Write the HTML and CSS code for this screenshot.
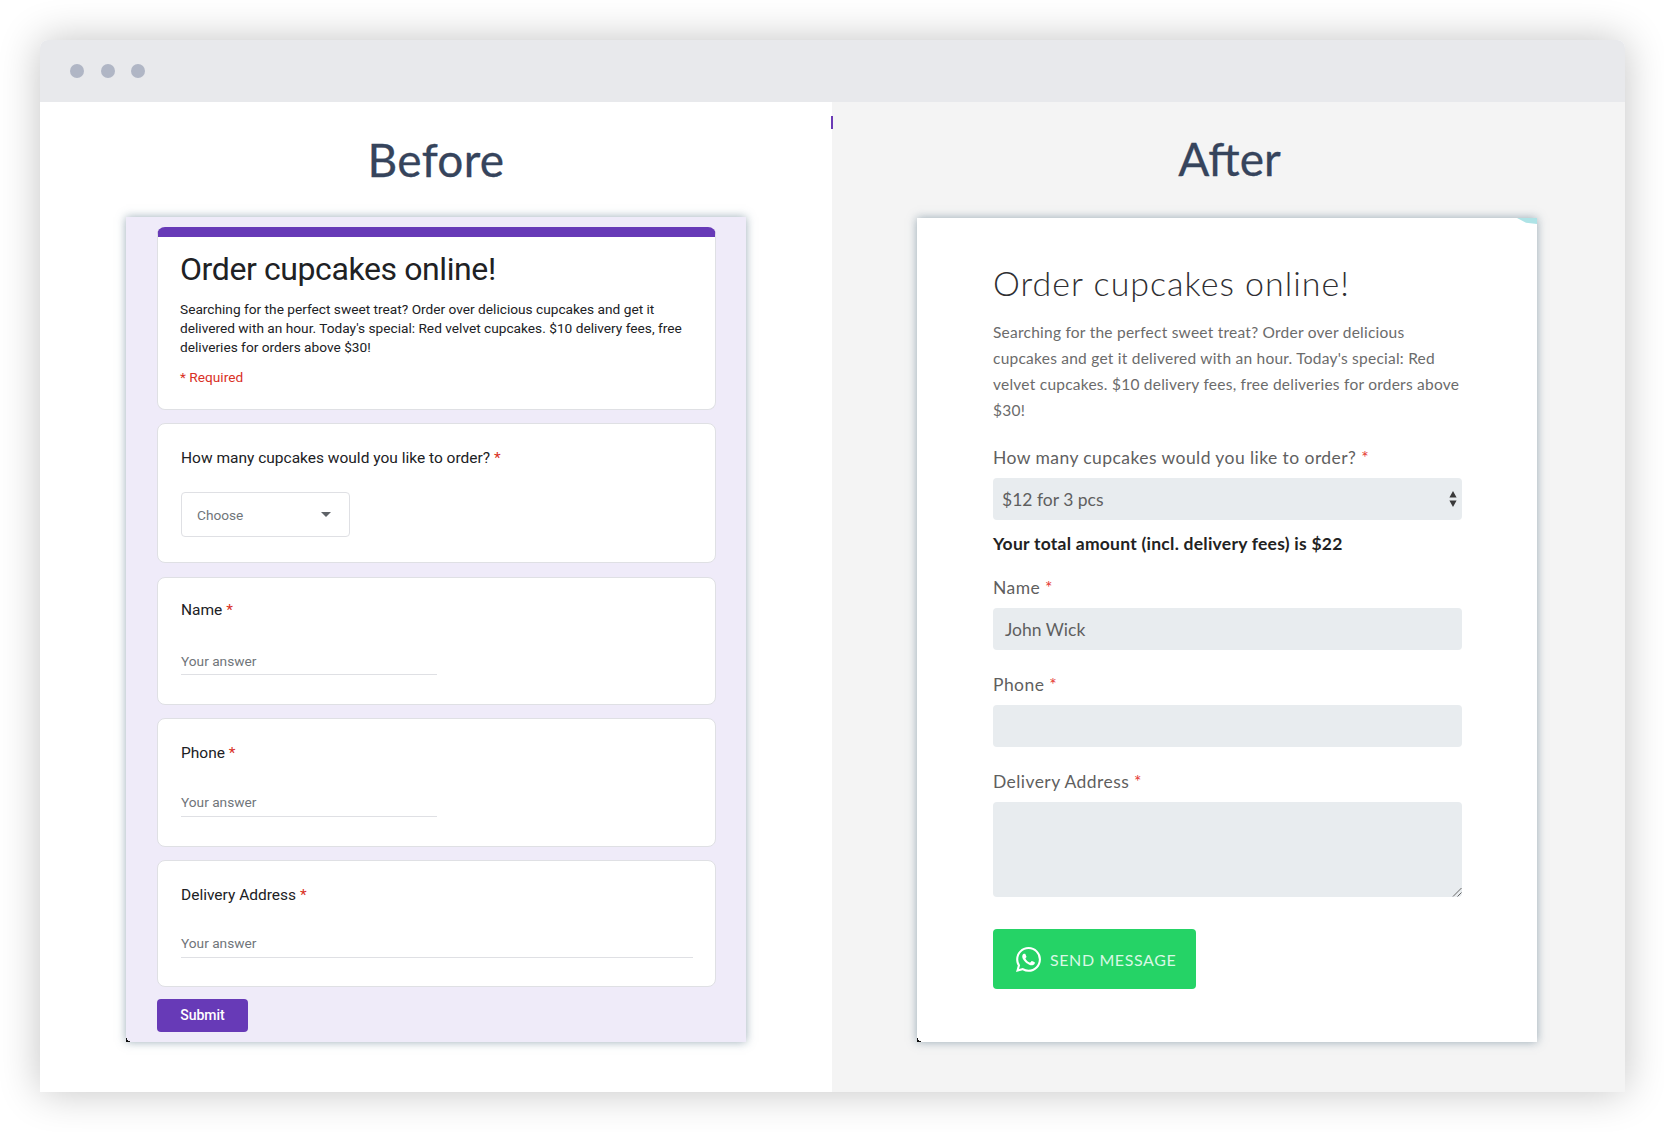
FILE: index.html
```html
<!DOCTYPE html>
<html lang="en">
<head>
<meta charset="utf-8">
<title>Before and After</title>
<link rel="stylesheet" href="styles.css">
</head>
<body>
<div class="window">
  <div class="titlebar"><span class="dot"></span><span class="dot"></span><span class="dot"></span></div>
  <div class="panels">
    <section class="panel panel-before">
      <h2 class="panel-title panel-title-before">Before</h2>
      <div class="shot shot-before">
        <div class="gcard gcard-head">
          <h1 class="g-title">Order cupcakes online!</h1>
          <p class="g-desc">Searching for the perfect sweet treat? Order over delicious cupcakes and get it delivered with an hour. Today's special: Red velvet cupcakes. $10 delivery fees, free deliveries for orders above $30!</p>
          <p class="g-required">* Required</p>
        </div>
        <div class="gcard gcard-select">
          <div class="g-label">How many cupcakes would you like to order? <span class="g-star">*</span></div>
          <div class="g-dropdown"><span>Choose</span><i class="g-caret"></i></div>
        </div>
        <div class="gcard gcard-a">
          <div class="g-label">Name <span class="g-star">*</span></div>
          <div class="g-answer">Your answer</div>
        </div>
        <div class="gcard gcard-b">
          <div class="g-label">Phone <span class="g-star">*</span></div>
          <div class="g-answer">Your answer</div>
        </div>
        <div class="gcard gcard-c">
          <div class="g-label">Delivery Address <span class="g-star">*</span></div>
          <div class="g-answer g-answer-wide">Your answer</div>
        </div>
        <div class="g-submit">Submit</div>
      </div>
    </section>
    <section class="panel panel-after">
      <h2 class="panel-title panel-title-after">After</h2>
      <div class="shot shot-after">
        <h1 class="a-title">Order cupcakes online!</h1>
        <p class="a-desc">Searching for the perfect sweet treat? Order over delicious cupcakes and get it delivered with an hour. Today's special: Red velvet cupcakes. $10 delivery fees, free deliveries for orders above $30!</p>
        <div class="a-label">How many cupcakes would you like to order? <span class="a-star">*</span></div>
        <div class="a-field a-select"><span>$12 for 3 pcs</span>
          <svg class="a-arrows" width="8" height="16" viewBox="0 0 8 16"><path d="M4 0l3.6 6.4H.4zM4 16L.4 9.6h7.2z" fill="#3a3a3a"/></svg>
        </div>
        <div class="a-total">Your total amount (incl. delivery fees) is $22</div>
        <div class="a-label">Name <span class="a-star">*</span></div>
        <div class="a-field a-input">John Wick</div>
        <div class="a-label">Phone <span class="a-star">*</span></div>
        <div class="a-field a-input"></div>
        <div class="a-label">Delivery Address <span class="a-star">*</span></div>
        <div class="a-field a-area">
          <svg class="a-grip" width="10" height="10" viewBox="0 0 10 10"><path d="M1 9.5L9.5 1M5.5 9.5L9.5 5.5" stroke="#666" stroke-width="1" fill="none"/></svg>
        </div>
        <div class="a-send">
          <svg width="25" height="25" viewBox="0 0 24 24"><path fill="#fff" d="M17.472 14.382c-.297-.149-1.758-.867-2.03-.967-.273-.099-.471-.148-.67.15-.197.297-.767.966-.94 1.164-.173.199-.347.223-.644.075-.297-.15-1.255-.463-2.39-1.475-.883-.788-1.48-1.761-1.653-2.059-.173-.297-.018-.458.13-.606.134-.133.298-.347.446-.52.149-.174.198-.298.298-.497.099-.198.05-.371-.025-.52-.075-.149-.669-1.612-.916-2.207-.242-.579-.487-.5-.669-.51-.173-.008-.371-.01-.57-.01-.198 0-.52.074-.792.372-.272.297-1.04 1.016-1.04 2.479 0 1.462 1.065 2.875 1.213 3.074.149.198 2.096 3.2 5.077 4.487.709.306 1.262.489 1.694.625.712.227 1.36.195 1.871.118.571-.085 1.758-.719 2.006-1.413.248-.694.248-1.289.173-1.413-.074-.124-.272-.198-.57-.347m-5.421 7.403h-.004a9.87 9.87 0 01-5.031-1.378l-.361-.214-3.741.982.998-3.648-.235-.374a9.86 9.86 0 01-1.51-5.26c.001-5.45 4.436-9.884 9.888-9.884 2.64 0 5.122 1.03 6.988 2.898a9.825 9.825 0 012.893 6.994c-.003 5.45-4.437 9.884-9.885 9.884m8.413-18.297A11.815 11.815 0 0012.05 0C5.495 0 .16 5.335.157 11.892c0 2.096.547 4.142 1.588 5.945L.057 24l6.305-1.654a11.882 11.882 0 005.683 1.448h.005c6.554 0 11.89-5.335 11.893-11.893a11.821 11.821 0 00-3.48-8.413z"/></svg>
          <span>SEND MESSAGE</span>
        </div>
      </div>
    </section>
  </div>
</div>
</body>
</html>
```
FILE: styles.css
```css
* { box-sizing: border-box; }
html, body { margin: 0; height: 100%; }
body {
  background: #fff;
  padding: 40px 39px 40px 40px;
  overflow: hidden;
}
.window {
  height: 1052px;
  border-radius: 8px 8px 0 0;
  background: #fff;
  box-shadow: 0 0 42px rgba(0, 0, 0, .24);
  display: flex;
  flex-direction: column;
}
.titlebar {
  height: 62px;
  flex: none;
  background: #e8e9ec;
  border-radius: 8px 8px 0 0;
  display: flex;
  align-items: center;
  gap: 16.5px;
  padding: 0 0 1px 30px;
}
.dot { width: 14px; height: 14px; border-radius: 50%; background: #b0b6c5; }
.panels { flex: 1; display: flex; min-height: 0; }
.panel { position: relative; display: flex; flex-direction: column; align-items: center; }
.panel-before { width: 792px; background: #fff; }
.panel-before::after {
  content: "";
  position: absolute;
  z-index: 1;
  right: -1px;
  top: 14px;
  width: 2px;
  height: 13px;
  background: #6a3ab5;
}
.panel-after { flex: 1; background: #f4f4f4; padding-right: 3px; }
.panel-title {
  margin: 0;
  font: 400 46px/56px Lato, sans-serif;
  color: #36445c;
  padding-top: 30px;
  height: 116px;
  -webkit-text-stroke: .3px #36445c;
}
.panel-title-before { height: 115px; letter-spacing: .3px; }
.panel-title-after { padding-top: 29px; margin-left: 5px; }
.shot {
  position: relative;
  width: 620px;
  box-shadow: 0 0 9px rgba(74, 105, 125, .55);
}
.shot-before { height: 825px; background: #efebf9; padding: 10px 30px 0 31px; }
.shot::before {
  content: "";
  position: absolute;
  left: 0;
  bottom: 0;
  width: 4px;
  height: 4px;
  background: radial-gradient(circle at 100% 0, transparent 3px, #111 3.5px);
}
.gcard {
  background: #fff;
  border: 1px solid #dfe0e4;
  border-radius: 8px;
  margin-bottom: 13px;
  padding: 22px 22px 0 23px;
  font-family: Roboto, sans-serif;
}
.gcard-head {
  height: 183px;
  border-top: 10px solid #673ab7;
  padding: 12px 22px 0;
}
.gcard-select { height: 140px; margin-bottom: 14px; }
.gcard-a { height: 128px; padding-top: 20px; }
.gcard-b { height: 129px; }
.gcard-c { height: 127px; }
.g-title {
  margin: 0;
  font: 400 32px/40px Roboto, sans-serif;
  color: #202124;
  letter-spacing: -.4px;
}
.g-desc {
  margin: 11px 0 0;
  font-size: 13.7px;
  line-height: 19px;
  color: #202124;
}
.g-required { margin: 11px 0 0; font-size: 13.7px; line-height: 19px; color: #d93025; }
.g-label { font-size: 15.5px; line-height: 24px; color: #202124; }
.g-star { color: #d93025; }
.g-dropdown {
  margin-top: 22px;
  width: 169px;
  height: 45px;
  border: 1px solid #dfe0e4;
  border-radius: 4px;
  display: flex;
  align-items: center;
  justify-content: space-between;
  padding: 0 18px 0 15px;
  font-size: 13.7px;
  color: #70757a;
}
.g-caret { width: 0; height: 0; border: 5px solid transparent; border-top-color: #5f6368; border-bottom: 0; }
.g-answer {
  width: 256px;
  border-bottom: 1px solid #dfe0e4;
  font-size: 13.7px;
  line-height: 20px;
  color: #70757a;
}
.gcard-a .g-answer { margin-top: 29px; height: 24px; }
.gcard-b .g-answer { margin-top: 27px; height: 25px; }
.gcard-c .g-answer { margin-top: 26px; height: 25px; }
.g-answer-wide { width: 512px; }
.g-submit {
  width: 91px;
  height: 33px;
  margin-top: -1px;
  background: #673ab7;
  border-radius: 4px;
  color: #fff;
  font: 500 14px/33px Roboto, sans-serif;
  text-align: center;
}
.shot-after {
  height: 824px;
  background: #fff;
  padding: 45px 75px 0 76px;
  font-family: Lato, sans-serif;
}
.shot-after::after {
  content: "";
  position: absolute;
  right: 0;
  top: 0;
  width: 20px;
  height: 6px;
  background: #aee3e6;
  clip-path: polygon(0 0, 100% 0, 100% 100%, 45% 80%);
}
.a-title {
  margin: 0;
  font: 300 34px/40px Lato, sans-serif;
  color: #2f2f33;
  letter-spacing: 1px;
}
.a-desc {
  margin: 16px 0 0;
  font-size: 15.5px;
  letter-spacing: .24px;
  line-height: 26px;
  color: #6b6b6b;
}
.a-label { margin-top: 23px; font-size: 17.5px; line-height: 24px; letter-spacing: .43px; color: #5f5f5f; }
.a-total + .a-label { margin-top: 20px; }
.a-star { color: #e53935; }
.a-field {
  margin-top: 8px;
  background: #e8ecef;
  border-radius: 4px;
  height: 42px;
  font-size: 17.5px;
  color: #5f5f5f;
  display: flex;
  align-items: center;
}
.a-select { justify-content: space-between; padding: 0 5px 0 9px; }
.a-input { padding: 0 12px; }
.a-area { height: 95px; position: relative; }
.a-grip { position: absolute; right: 0; bottom: 0; }
.a-arrows { display: block; }
.a-total { margin-top: 12px; font-size: 17.5px; line-height: 24px; letter-spacing: .25px; font-weight: 700; color: #222; }
.a-send {
  margin-top: 32px;
  width: 203px;
  height: 60px;
  background: #25d366;
  border-radius: 4px;
  display: flex;
  align-items: center;
  gap: 9px;
  padding-left: 23px;
  color: #d8f8e4;
  font-size: 16px;
  letter-spacing: .6px;
}
```
